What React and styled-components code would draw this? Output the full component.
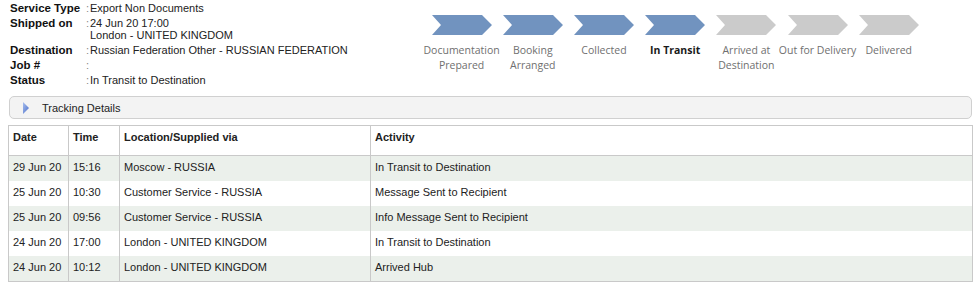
import React from 'react';
import styled, { createGlobalStyle } from 'styled-components';

const GlobalStyle = createGlobalStyle`
  body {
    margin: 0;
    background: #fff;
    font-family: "Liberation Sans", Arial, sans-serif;
    color: #222;
  }
`;

const Page = styled.div`
  width: 980px;
  padding: 0 7px 0 8px;
  box-sizing: border-box;
`;

const Top = styled.div`
  display: flex;
  height: 96px;
`;

const Info = styled.div`
  width: 416px;
  padding: 0.5px 0 0 2px;
`;

const InfoRow = styled.div`
  display: flex;
`;

const Label = styled.div`
  width: 76px;
  flex-shrink: 0;
  font-weight: bold;
  font-size: 11.5px;
  line-height: 15px;
  color: #111;
`;

const Colon = styled.span`
  width: 4px;
  flex-shrink: 0;
  font-size: 11px;
  line-height: 15px;
  color: #888;
`;

const Value = styled.div`
  font-size: 11px;
  line-height: ${(p) => (p.$multi ? '12px' : '15px')};
  padding: ${(p) => (p.$multi ? '1.5px 0' : '0')};
  color: #222;
  white-space: pre-line;
`;

const Steps = styled.div`
  display: flex;
  padding-top: 15px;
`;

const Step = styled.div`
  width: 71.2px;
  display: flex;
  flex-direction: column;
  align-items: center;
`;

const StepLabel = styled.div`
  margin-top: 8px;
  font-family: "Open Sans", "Noto Sans", sans-serif;
  font-size: 10.5px;
  line-height: 15px;
  text-align: center;
  white-space: nowrap;
  color: ${(p) => (p.$current ? '#1a1a1a' : '#6f6f6f')};
  font-weight: ${(p) => (p.$current ? 'bold' : 'normal')};
`;

const Bar = styled.div`
  margin: 0 1px;
  height: 21px;
  border: 1px solid #d0d0d0;
  border-radius: 5px;
  background: #f3f3f3;
  display: flex;
  align-items: center;
  padding-left: 12px;
  gap: 12px;
  font-size: 11px;
  color: #222;
`;

const Table = styled.table`
  margin-top: 6px;
  width: 100%;
  border-collapse: collapse;
  border: 1px solid #c9c9c9;
  font-size: 11px;
  table-layout: fixed;
`;

const HeadCell = styled.th`
  width: ${(p) => p.$w || 'auto'};
  height: 30px;
  box-sizing: border-box;
  text-align: left;
  vertical-align: top;
  padding: 4px 4px 0 4px;
  line-height: 14px;
  font-weight: bold;
  color: #222;
  border-left: 1px solid #c9c9c9;
  border-bottom: 1px solid #c9c9c9;
`;

const Row = styled.tr`
  background: ${(p) => (p.$alt ? '#ebf0eb' : '#fff')};
`;

const Cell = styled.td`
  height: 25.2px;
  box-sizing: border-box;
  vertical-align: top;
  padding: 4px 4px 0 4px;
  line-height: 14px;
  color: #222;
  border-left: 1px solid #c9c9c9;
  white-space: nowrap;
`;

const Chevron = ({ done }) => (
  <svg width="60" height="20" viewBox="0 0 60 20">
    <polygon points="0,0 50,0 60,10 50,20 0,20 9,10" fill={done ? '#7193bf' : '#cbcbcb'} />
  </svg>
);

const Arrow = () => (
  <svg width="8" height="12" viewBox="0 0 8 12">
    <defs>
      <linearGradient id="arr" x1="0" y1="0" x2="1" y2="1">
        <stop offset="0" stopColor="#a9c0ef" />
        <stop offset="1" stopColor="#4a6dc8" />
      </linearGradient>
    </defs>
    <polygon points="1,0 7,6 1,12" fill="url(#arr)" />
  </svg>
);

const info = [
  ['Service Type', 'Export Non Documents'],
  ['Shipped on', '24 Jun 20 17:00\nLondon - UNITED KINGDOM', true],
  ['Destination', 'Russian Federation Other - RUSSIAN FEDERATION'],
  ['Job #', ''],
  ['Status', 'In Transit to Destination'],
];

const steps = [
  ['Documentation\nPrepared', true],
  ['Booking\nArranged', true],
  ['Collected', true],
  ['In Transit', true, true],
  ['Arrived at\nDestination', false],
  ['Out for Delivery', false],
  ['Delivered', false],
];

const rows = [
  ['29 Jun 20', '15:16', 'Moscow - RUSSIA', 'In Transit to Destination'],
  ['25 Jun 20', '10:30', 'Customer Service - RUSSIA', 'Message Sent to Recipient'],
  ['25 Jun 20', '09:56', 'Customer Service - RUSSIA', 'Info Message Sent to Recipient'],
  ['24 Jun 20', '17:00', 'London - UNITED KINGDOM', 'In Transit to Destination'],
  ['24 Jun 20', '10:12', 'London - UNITED KINGDOM', 'Arrived Hub'],
];

export default function App() {
  return (
    <Page>
      <GlobalStyle />
      <Top>
        <Info>
          {info.map(([l, v, multi]) => (
            <InfoRow key={l}>
              <Label>{l}</Label>
              <Colon>:</Colon>
              <Value $multi={multi}>{v}</Value>
            </InfoRow>
          ))}
        </Info>
        <Steps>
          {steps.map(([label, done, current]) => (
            <Step key={label}>
              <Chevron done={done} />
              <StepLabel $current={current}>
                {label.split('\n').map((line) => (
                  <div key={line}>{line}</div>
                ))}
              </StepLabel>
            </Step>
          ))}
        </Steps>
      </Top>

      <Bar>
        <Arrow />
        <span>Tracking Details</span>
      </Bar>

      <Table>
        <thead>
          <tr>
            <HeadCell $w="60px">Date</HeadCell>
            <HeadCell $w="51px">Time</HeadCell>
            <HeadCell $w="251px">Location/Supplied via</HeadCell>
            <HeadCell>Activity</HeadCell>
          </tr>
        </thead>
        <tbody>
          {rows.map((r, i) => (
            <Row key={i} $alt={i % 2 === 0}>
              {r.map((c, j) => (
                <Cell key={j}>{c}</Cell>
              ))}
            </Row>
          ))}
        </tbody>
      </Table>
    </Page>
  );
}
